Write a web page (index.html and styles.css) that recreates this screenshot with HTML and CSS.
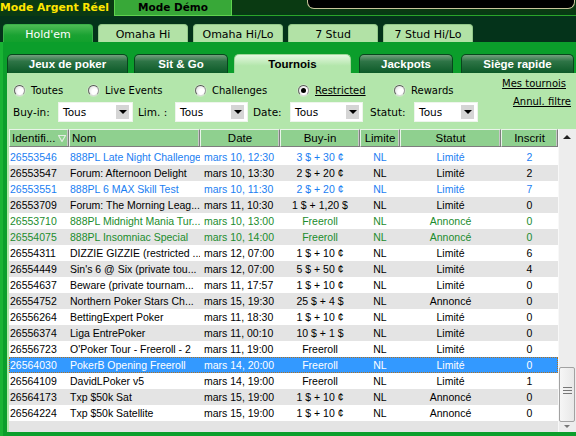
FILE: index.html
```html
<!DOCTYPE html>
<html lang="fr">
<head>
<meta charset="utf-8">
<title>Tournois</title>
<link rel="stylesheet" href="styles.css">
</head>
<body>
<div class="app">
  <div class="topbar">
    <div class="mode-real">Mode Argent Réel</div>
    <div class="mode-demo">Mode Démo</div>
    <div class="topfill"><div class="blackbox"></div></div>
  </div>
  <div class="gametabs">
    <div class="gtab active">Hold'em</div>
    <div class="gtab">Omaha Hi</div>
    <div class="gtab">Omaha Hi/Lo</div>
    <div class="gtab">7 Stud</div>
    <div class="gtab">7 Stud Hi/Lo</div>
  </div>
  <div class="main">
    <div class="subtabs">
      <div class="stab w1">Jeux de poker</div>
      <div class="stab w2">Sit &amp; Go</div>
      <div class="stab w3 active">Tournois</div>
      <div class="stab w4">Jackpots</div>
      <div class="stab w5">Siège rapide</div>
    </div>
    <div class="panel">
      <div class="radios">
        <div class="radio r1"><span class="dot"></span>Toutes</div>
        <div class="radio r2"><span class="dot"></span>Live Events</div>
        <div class="radio r3"><span class="dot"></span>Challenges</div>
        <div class="radio r4"><span class="dot checked"></span><span class="ul">Restricted</span></div>
        <div class="radio r5"><span class="dot"></span>Rewards</div>
        <div class="link">Mes tournois</div>
      </div>
      <div class="filters">
        <div class="lbl l1">Buy-in:</div>
        <div class="sel s1"><span class="val">Tous</span><span class="arrow"></span></div>
        <div class="lbl l2">Lim. :</div>
        <div class="sel s2"><span class="val">Tous</span><span class="arrow"></span></div>
        <div class="lbl l3">Date:</div>
        <div class="sel s3"><span class="val">Tous</span><span class="arrow"></span></div>
        <div class="lbl l4">Statut:</div>
        <div class="sel s4"><span class="val">Tous</span><span class="arrow"></span></div>
        <div class="link link2">Annul. filtre</div>
      </div>
      <div class="tablewrap">
        <div class="list">
          <div class="thead">
            <div class="th left"><span class="thtext">Identifi...</span><svg class="sort" width="8" height="8" viewBox="0 0 8 8"><path d="M0.5 1.5 H7.5 L4 7.5 Z" fill="none" stroke="#e2ece2" stroke-width="1.2"/></svg></div>
            <div class="th left">Nom</div>
            <div class="th">Date</div>
            <div class="th">Buy-in</div>
            <div class="th">Limite</div>
            <div class="th">Statut</div>
            <div class="th">Inscrit</div>
          </div>
          <div class="rows">
            <div class="row blue"><span>26553546</span><span>888PL Late Night Challenge</span><span class="d">mars 10, 12:30</span><span class="c">3 $ + 30 ¢</span><span class="c">NL</span><span class="c">Limité</span><span class="c">2</span></div>
            <div class="row"><span>26553547</span><span>Forum: Afternoon Delight</span><span class="d">mars 10, 13:30</span><span class="c">2 $ + 20 ¢</span><span class="c">NL</span><span class="c">Limité</span><span class="c">2</span></div>
            <div class="row blue"><span>26553551</span><span>888PL 6 MAX Skill Test</span><span class="d">mars 10, 11:30</span><span class="c">2 $ + 20 ¢</span><span class="c">NL</span><span class="c">Limité</span><span class="c">7</span></div>
            <div class="row"><span>26553709</span><span>Forum: The Morning Leag...</span><span class="d">mars 11, 10:30</span><span class="c">1 $ + 1,20 $</span><span class="c">NL</span><span class="c">Limité</span><span class="c">0</span></div>
            <div class="row green"><span>26553710</span><span>888PL Midnight Mania Tur...</span><span class="d">mars 10, 13:00</span><span class="c">Freeroll</span><span class="c">NL</span><span class="c">Annoncé</span><span class="c">0</span></div>
            <div class="row green"><span>26554075</span><span>888PL Insomniac Special</span><span class="d">mars 10, 14:00</span><span class="c">Freeroll</span><span class="c">NL</span><span class="c">Annoncé</span><span class="c">0</span></div>
            <div class="row"><span>26554311</span><span>DIZZIE GIZZIE (restricted ...</span><span class="d">mars 12, 07:00</span><span class="c">1 $ + 10 ¢</span><span class="c">NL</span><span class="c">Limité</span><span class="c">6</span></div>
            <div class="row"><span>26554449</span><span>Sin's 6 @ Six (private tou...</span><span class="d">mars 12, 07:00</span><span class="c">5 $ + 50 ¢</span><span class="c">NL</span><span class="c">Limité</span><span class="c">4</span></div>
            <div class="row"><span>26554637</span><span>Beware (private tournam...</span><span class="d">mars 11, 17:57</span><span class="c">1 $ + 10 ¢</span><span class="c">NL</span><span class="c">Limité</span><span class="c">0</span></div>
            <div class="row"><span>26554752</span><span>Northern Poker Stars Ch...</span><span class="d">mars 15, 19:30</span><span class="c">25 $ + 4 $</span><span class="c">NL</span><span class="c">Annoncé</span><span class="c">0</span></div>
            <div class="row"><span>26556264</span><span>BettingExpert Poker</span><span class="d">mars 11, 18:30</span><span class="c">1 $ + 10 ¢</span><span class="c">NL</span><span class="c">Limité</span><span class="c">0</span></div>
            <div class="row"><span>26556374</span><span>Liga EntrePoker</span><span class="d">mars 11, 00:10</span><span class="c">10 $ + 1 $</span><span class="c">NL</span><span class="c">Limité</span><span class="c">0</span></div>
            <div class="row"><span>26556723</span><span>O'Poker Tour - Freeroll - 2</span><span class="d">mars 11, 19:00</span><span class="c">Freeroll</span><span class="c">NL</span><span class="c">Limité</span><span class="c">0</span></div>
            <div class="row selected"><span>26564030</span><span>PokerB Opening Freeroll</span><span class="d">mars 14, 20:00</span><span class="c">Freeroll</span><span class="c">NL</span><span class="c">Limité</span><span class="c">0</span></div>
            <div class="row"><span>26564109</span><span>DavidLPoker v5</span><span class="d">mars 14, 19:00</span><span class="c">Freeroll</span><span class="c">NL</span><span class="c">Limité</span><span class="c">1</span></div>
            <div class="row"><span>26564173</span><span>Txp $50k Sat</span><span class="d">mars 15, 19:00</span><span class="c">1 $ + 10 ¢</span><span class="c">NL</span><span class="c">Annoncé</span><span class="c">0</span></div>
            <div class="row"><span>26564224</span><span>Txp $50k Satellite</span><span class="d">mars 15, 19:00</span><span class="c">1 $ + 10 ¢</span><span class="c">NL</span><span class="c">Annoncé</span><span class="c">0</span></div>
          </div>
        </div>
        <div class="scroll">
          <div class="up"><span class="tri-up"></span></div>
          <div class="track"></div>
          <div class="thumb"><span class="grip"></span></div>
          <div class="down"><span class="tri-down"></span></div>
        </div>
      </div>
    </div>
  </div>
</div>
</body>
</html>
```

FILE: styles.css
```css
html, body {
  margin: 0;
  padding: 0;
}
body {
  width: 576px;
  height: 436px;
  overflow: hidden;
  background: #05361a;
  font-family: "DejaVu Sans", "Liberation Sans", sans-serif;
}
.app {
  width: 576px;
  height: 436px;
}

/* top bar */
.topbar {
  display: flex;
  height: 16px;
  background: #0a3a12;
}
.mode-real {
  width: 114px;
  color: #ffe600;
  font-weight: bold;
  font-size: 10.8px;
  line-height: 15px;
  white-space: nowrap;
}
.mode-demo {
  width: 116px;
  height: 15px;
  background: #38a838;
  border: 1px solid #5fd34f;
  border-top: none;
  font-weight: bold;
  font-size: 10.5px;
  line-height: 15px;
  text-align: center;
  color: #000;
}
.topfill {
  flex: 1;
  height: 15px;
  border-bottom: 1px solid #2aa52a;
  box-shadow: inset 0 -3px 0 #073a14;
}
.blackbox {
  margin-left: 75px;
  margin-right: 1px;
  height: 8px;
  background: #000;
  border: 1px solid #c9c59c;
  border-top: none;
  border-radius: 0 0 7px 7px;
}

/* game tabs */
.gametabs {
  display: flex;
  align-items: flex-end;
  height: 26px;
  padding-left: 3px;
  box-sizing: border-box;
  background: #04331a;
}
.gtab {
  width: 90px;
  height: 18px;
  margin-right: 5px;
  box-sizing: border-box;
  background: #b2e2a6;
  border: 1px solid #92c888;
  border-bottom: none;
  border-radius: 4px 4px 0 0;
  font-size: 11px;
  line-height: 19px;
  text-align: center;
  color: #000;
  white-space: nowrap;
}
.gtab.active {
  background: linear-gradient(#4cbb55, #1aa232 60%, #12a02c);
  border-color: #3bb048;
  color: #fff;
}

/* main */
.main {
  height: 394px;
  box-sizing: border-box;
  padding: 12px 0 0 7px;
  background: #0b9e2b;
  box-shadow: inset 3px 0 0 #19b334;
}
.subtabs {
  display: flex;
  height: 19px;
}
.stab {
  height: 19px;
  box-sizing: border-box;
  background: linear-gradient(#75a07f, #2e7446 35%, #0c5a28);
  border: 1px solid #07461c;
  border-bottom: none;
  border-radius: 5px 5px 0 0;
  color: #fff;
  font-family: "Liberation Sans", Arial, sans-serif;
  font-weight: bold;
  font-size: 11.5px;
  line-height: 18px;
  text-align: center;
  white-space: nowrap;
}
.stab.active {
  background: linear-gradient(#e4f7e0, #b3e6ab 60%);
  border-color: #9fd898;
  color: #000;
}
.w1 { width: 121px; margin-right: 6px; }
.w2 { width: 94px; margin-right: 6px; }
.w3 { width: 117px; margin-right: 8px; }
.w4 { width: 94px; margin-right: 8px; }
.w5 { width: 113px; }

.panel {
  height: 359px;
  box-sizing: border-box;
  padding-top: 10px;
  background: #b3e6ab;
  font-size: 10px;
  color: #000;
}

/* radios */
.radios {
  display: flex;
  align-items: center;
  height: 14px;
  padding-left: 7px;
}
.radio {
  display: flex;
  align-items: center;
  white-space: nowrap;
}
.r1 { width: 74px; }
.r2 { width: 107px; }
.r3 { width: 103px; }
.r4 { width: 96px; }
.dot {
  position: relative;
  width: 9px;
  height: 9px;
  margin-right: 6px;
  border-radius: 50%;
  border: 1px solid;
  border-color: #555 #9a9a9a #dcdcdc #666;
  background: radial-gradient(circle at 65% 65%, #ffffff 35%, #d6d6d6 95%);
  box-shadow: 0 0 0 1px #c9e8c2;
}
.dot.checked::after {
  content: "";
  position: absolute;
  left: 2px;
  top: 2px;
  width: 5px;
  height: 5px;
  border-radius: 50%;
  background: #000;
}
.ul {
  text-decoration: underline;
}
.link {
  margin-left: auto;
  margin-right: 10px;
  align-self: flex-start;
  margin-top: -5px;
  text-decoration: underline;
  white-space: nowrap;
}

/* filters */
.filters {
  display: flex;
  align-items: center;
  height: 20px;
  margin-top: 5px;
  padding-left: 6px;
}
.lbl {
  white-space: nowrap;
  font-size: 10.5px;
}
.l1 { width: 45px; }
.l2 { width: 37px; margin-left: 5px; }
.l3 { width: 37px; margin-left: 5px; }
.l4 { width: 44px; margin-left: 7px; }
.sel {
  display: flex;
  align-items: center;
  height: 20px;
  box-sizing: border-box;
  padding: 0 3px 0 4px;
  background: #fff;
  border: 1px solid #eef5ec;
}
.s1 { width: 75px; }
.s2 { width: 73px; }
.s3 { width: 73px; }
.s4 { width: 64px; }
.val {
  flex: 1;
  font-size: 10.5px;
}
.arrow {
  position: relative;
  width: 13px;
  height: 14px;
  background: #d5d5d5;
}
.arrow::after {
  content: "";
  position: absolute;
  left: 3px;
  top: 5px;
  border-left: 4px solid transparent;
  border-right: 4px solid transparent;
  border-top: 4px solid #000;
}
.link2 {
  margin-right: 5px;
  margin-top: -6px;
}

/* table */
.tablewrap {
  display: flex;
  height: 303px;
  margin-top: 7px;
  margin-left: 2px;
}
.list {
  width: 549px;
  background: #e4e4e4;
  overflow: hidden;
}
.thead,
.row {
  display: grid;
  grid-template-columns: 60px 131px 80px 80px 40px 101px 57px;
}
.thead {
  height: 18px;
  background: #d4d4d4;
}
.th {
  height: 18px;
  box-sizing: border-box;
  background: #8fd08f;
  border: 1px solid;
  border-color: #e9f4e9 #7d7d7d #7d7d7d #e9f4e9;
  box-shadow: inset -1px 0 0 #c8c8c8;
  font-family: "Liberation Sans", Arial, sans-serif;
  font-size: 11.5px;
  line-height: 16px;
  text-align: center;
  white-space: nowrap;
  overflow: hidden;
}
.th.left {
  text-align: left;
  padding-left: 2px;
}
.th.left:first-child {
  display: flex;
  align-items: center;
}
.thtext {
  flex: 1;
}
.sort {
  flex: none;
  display: block;
  margin-right: 2px;
}
.rows {
  background: #fff;
  padding-top: 2px;
}
.row {
  height: 16px;
  line-height: 16px;
  font-family: "Liberation Sans", Arial, sans-serif;
  font-size: 10.5px;
  color: #000;
  background: #fff;
}
.row:nth-child(even) {
  background: #e4e4e4;
}
.row span {
  white-space: nowrap;
  overflow: hidden;
  padding-left: 1px;
}
.row .d {
  padding-left: 4px;
}
.row .c {
  text-align: center;
  padding-left: 0;
}
.row.blue { color: #1a7ef2; }
.row.green { color: #1b8c2d; }
.row.selected {
  background: #3399ff;
  color: #fff;
  outline: 1px dotted #b07020;
  outline-offset: -1px;
}

/* scrollbar */
.scroll {
  display: flex;
  flex-direction: column;
  width: 18px;
  height: 303px;
  background: #ededed;
  border-left: 1px solid #f8f8f8;
  box-sizing: border-box;
}
.up {
  position: relative;
  height: 16px;
}
.tri-up {
  position: absolute;
  left: 4px;
  top: 6px;
  border-left: 4px solid transparent;
  border-right: 4px solid transparent;
  border-bottom: 4px solid #222;
}
.track {
  flex: 1;
}
.thumb {
  position: relative;
  height: 55px;
  margin: 0 1px 0 0;
  box-sizing: border-box;
  background: linear-gradient(90deg, #f6f6f6, #e8e8e8);
  border: 1px solid #a2a2a2;
  border-radius: 2px;
}
.grip {
  position: absolute;
  left: 3px;
  top: 19px;
  width: 9px;
  height: 7px;
  background: repeating-linear-gradient(#777 0 1px, transparent 1px 3px);
}
.down {
  position: relative;
  height: 10px;
}
.tri-down {
  position: absolute;
  left: 5px;
  top: 3px;
  border-left: 3px solid transparent;
  border-right: 3px solid transparent;
  border-top: 3px solid #777;
}
```
